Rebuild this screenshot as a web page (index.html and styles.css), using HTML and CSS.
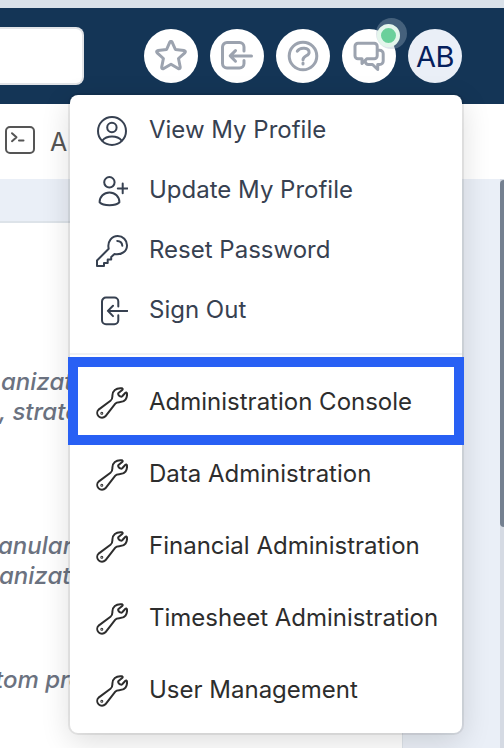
FILE: index.html
```
<!DOCTYPE html>
<html lang="en">
<head>
  <meta charset="UTF-8" />
  <meta name="viewport" content="width=device-width, initial-scale=1.0"/>
  <title>Administration Console</title>
  <link rel="stylesheet" href="styles.css">
</head>
<body>

  <svg class="sprite" xmlns="http://www.w3.org/2000/svg">
    <symbol id="wrench" viewBox="0 0 32 32">
      <path d="M2.600 22.600 14.500 13.800c1.900-1.400 2-2.600 1.900-5C16.300 3.800 20 .8 25.500 1.300c1.300.1 1.500.9.700 1.600L22.500 6c-.9.900.3 3.400 2.300 3.600.6.100 1 0 1.400-.4l3-3.200c.8-.8 1.700-.5 1.800.5.4 5-2.100 8.400-6.800 8.600-2.300.1-3.600-.1-4.900 1.500L9.400 29.300A4.700 4.700 0 0 1 2.600 22.600z"/>
      <circle cx="5.800" cy="26.300" r=".5"/>
    </symbol>
    <symbol id="exit" viewBox="0 0 32 32">
      <path d="M22.300 11.500V6.500a4 4 0 0 0-4-4H10a4 4 0 0 0-4 4v18.800a4 4 0 0 0 4 4h8.300a4 4 0 0 0 4-4v-5M31.500 15.900H12M17 10.700l-5.100 5.200 5.100 5.200"/>
    </symbol>
  </svg>

  <header>
    <div class="search"></div>
    <nav>
      <a class="round" href="#">
        <svg viewBox="0 0 32 32"><path d="M14.700 2.300q1.300-2 2.500 0l3.200 7.200 8.500 1q2.300.5.900 2.300l-6.300 5.700 1.700 8.500q.1 2.300-2 1.500L16 24.300l-7.300 4.200q-2.200.8-2-1.500l1.700-8.500L2.200 12.800q-1.400-1.800.9-2.300l8.500-1z"/></svg>
      </a>
      <a class="round" href="#">
        <svg viewBox="0 0 32 32"><path d="M23 11V7a4.500 4.500 0 0 0-4.500-4.500H6A4.500 4.500 0 0 0 1.500 7v16.500A4.500 4.500 0 0 0 6 28h12.500a4.500 4.500 0 0 0 4.500-4.500v-3M30.500 15.900H9.500M14.500 10.600l-5.300 5.300 5.300 5.300"/></svg>
      </a>
      <a class="round" href="#">
        <svg viewBox="0 0 32 32"><circle cx="16" cy="16" r="13.800"/><path d="M10.300 11.200c3-4.400 11.800-3.600 11.800 1.200 0 3.600-6.100 3.300-6.100 7.400M16 23v1"/></svg>
      </a>
      <a class="round" href="#">
        <svg viewBox="0 0 32 32"><path d="M5 3.300h16.200a3 3 0 0 1 3 3v9.400a3 3 0 0 1-3 3H14L9 23.500v-4.800H5a3 3 0 0 1-3-3V6.300a3 3 0 0 1 3-3zM24.500 10.200h2.200a3.500 3.500 0 0 1 3.500 3.500V21a3.500 3.500 0 0 1-3.500 3.500h-2v5l-5.200-5h-4.200a3 3 0 0 1-2.800-2.500"/></svg>
        <span class="badge"></span>
      </a>
      <a class="round avatar" href="#">AB</a>
    </nav>
  </header>

  <div class="toolbar">
    <svg viewBox="0 0 32 32"><rect x="2" y="3" width="28" height="26" rx="4"/><path d="m8 9.200 4.500 4-4.500 4M15 16.500h4.500"/></svg>
    <span>A</span>
  </div>

  <main>
    <div class="panel">
      <p class="first">anizat<br><span class="shift">, strate</span></p>
      <p class="second">anular<br><span class="shift">anizat</span></p>
      <p class="third">tom pro</p>
    </div>
    <div class="scrollbar"><div class="thumb"></div></div>
  </main>

  <div class="menu">
    <div class="profile">
      <a href="#">
        <svg viewBox="0 0 32 32"><circle cx="16" cy="16" r="14"/><circle cx="15.900" cy="12.500" r="4.700"/><path d="M6.300 25.600c4.500-5.500 14.900-5.500 19.400 0"/></svg>
        View My Profile
      </a>
      <a href="#">
        <svg viewBox="0 0 32 32"><circle cx="13.400" cy="7.300" r="5.200"/><path d="M3.600 27.200c0-5.500 4.300-9.700 9.900-9.700s9.900 4.200 9.900 9.700c-3.800 4-16 4-19.800 0zM26.700 8.500v9.800M21.800 13.400h9.800"/></svg>
        Update My Profile
      </a>
      <a href="#">
        <svg viewBox="0 0 32 32"><path d="M12.700 13.800C11 6.500 16 1 21.700 1A9.300 9.300 0 0 1 31 10.400c0 5.700-5.500 9.900-12.500 8.700l-3.300 2.800v2.500h-3.500V28H8v3H1v-5.500z"/><path d="M21.200 5.900c2.900.1 4.900 2 5.100 4.900"/></svg>
        Reset Password
      </a>
      <a href="#">
        <svg><use href="#exit"/></svg>
        Sign Out
      </a>
    </div>
    <div class="admin">
      <a class="selected" href="#"><svg><use href="#wrench"/></svg>Administration Console</a>
      <a href="#"><svg><use href="#wrench"/></svg>Data Administration</a>
      <a href="#"><svg><use href="#wrench"/></svg>Financial Administration</a>
      <a href="#"><svg><use href="#wrench"/></svg>Timesheet Administration</a>
      <a href="#"><svg><use href="#wrench"/></svg>User Management</a>
    </div>
  </div>

</body>
</html>
```
FILE: styles.css
```
* {
  margin: 0;
  padding: 0;
  box-sizing: border-box;
}

body {
  height: 748px;
  display: flex;
  flex-direction: column;
  font-family: Inter, sans-serif;
  font-size: 24px;
  overflow: hidden;
  background-color: #eaeff7;
}

a {
  color: inherit;
  text-decoration: none;
}

svg {
  width: 32px;
  height: 32px;
  flex: none;
  fill: none;
  stroke: currentColor;
  stroke-width: 2;
  stroke-linecap: round;
  stroke-linejoin: round;
}

.sprite {
  display: none;
}

header {
  height: 104px;
  flex: none;
  display: flex;
  align-items: flex-start;
  justify-content: space-between;
  padding: 19px 42px 0 0;
  background-color: #143556;
  border-top: 8px solid #d9e1e9;
}

.search {
  width: 84px;
  height: 58px;
  background: white;
  border: 2px solid #e2e4e7;
  border-left: none;
  border-radius: 0 8px 8px 0;
}

nav {
  display: flex;
  gap: 12px;
  padding-top: 2px;
}

.round {
  position: relative;
  width: 54px;
  height: 54px;
  display: flex;
  align-items: center;
  justify-content: center;
  border-radius: 50%;
  background: white;
  color: #9ca3af;
}

.round svg {
  stroke-width: 3;
}

.avatar {
  background: #eaeff7;
  color: #06205c;
  font-size: 29px;
  letter-spacing: -0.5px;
}

.badge {
  position: absolute;
  top: -11px;
  left: 34px;
  width: 31px;
  height: 31px;
  border-radius: 50%;
  background: rgba(160, 180, 195, 0.35);
}

.badge::before {
  content: '';
  position: absolute;
  top: 6px;
  left: 1px;
  box-sizing: border-box;
  width: 23px;
  height: 23px;
  border-radius: 50%;
  border: 4px solid #e4f6ec;
  background: #6bd09b;
}

.toolbar {
  height: 75px;
  flex: none;
  display: flex;
  align-items: center;
  gap: 14px;
  padding-left: 4px;
  background: white;
  color: #555;
  font-size: 25px;
}

.toolbar svg {
  margin-bottom: 3px;
}

main {
  flex: 1;
  display: flex;
  justify-content: space-between;
}

.panel {
  width: 403px;
  margin-top: 42px;
  padding-top: 144px;
  background: white;
  border-top: 2px solid #dde3e9;
  border-right: 1px solid #dde3e9;
}

.panel p {
  line-height: 30px;
  font-style: italic;
  font-weight: 500;
  color: #6b7280;
  white-space: nowrap;
}

.panel .first {
  padding-left: 1px;
}

.panel .first .shift {
  margin-left: -2px;
}

.panel .second {
  margin-top: 104px;
  margin-left: -2px;
}

.panel .second .shift {
  margin-left: 1px;
}

.panel .third {
  margin-top: 74px;
  margin-left: -5px;
}

.scrollbar {
  width: 4px;
  background: #d5dae3;
}

.thumb {
  width: 8px;
  height: 347px;
  margin-top: 1px;
  border-radius: 5px;
  background: #748090;
}

.menu {
  position: absolute;
  top: 95px;
  left: 70px;
  width: 392px;
  height: 638px;
  padding-top: 4px;
  border-radius: 8px;
  background: white;
  color: #374151;
  box-shadow: 0 0 0 2px rgba(0, 0, 0, 0.07), 0 8px 30px rgba(0, 0, 0, 0.14);
}

.menu a {
  height: 60px;
  display: flex;
  align-items: center;
  gap: 21px;
  padding-left: 26px;
  white-space: nowrap;
}

.menu svg {
  position: relative;
  top: 2px;
}

.profile {
  padding-bottom: 14px;
  border-bottom: 2px solid #f0f1f2;
}

.admin {
  padding-top: 11px;
  color: #2d2d2d;
}

.admin a {
  height: 72px;
}

/* outline sits just outside the menu edges */
.admin .selected {
  height: 88px;
  margin: -9px -2px -8px;
  padding: 0 0 0 18px;
  border: 10px solid #2860f4;
}
```
